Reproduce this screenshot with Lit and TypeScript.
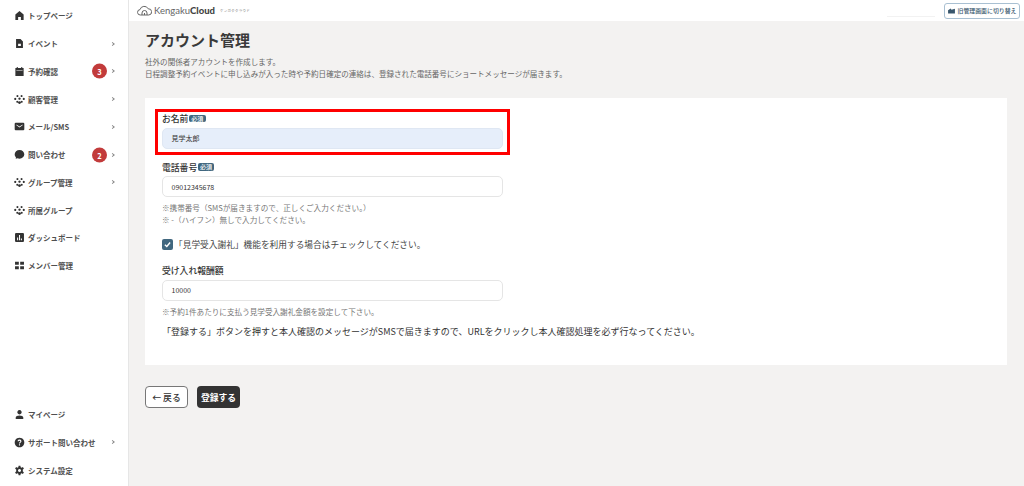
import { LitElement, html, css, svg } from "lit";
import { customElement } from "lit/decorators.js";

const P = (d: string) => html`<svg class="ic" viewBox="0 0 16 16">${svg`<path d=${d}></path>`}</svg>`;
const people = "M5 1.4a1.5 1.5 0 1 0 .01 0M11 1.4a1.5 1.5 0 1 0 .01 0M1.8 5.6a1.5 1.5 0 1 0 .01 0M14.2 5.6a1.5 1.5 0 1 0 .01 0M8 5a1.7 1.7 0 1 0 .01 0M4.8 9.8a1.5 1.5 0 1 0 .01 0M11.2 9.8a1.5 1.5 0 1 0 .01 0M8 10.6a2 2 0 1 0 .01 0z";
const icons: Record<string, string> = {
  home: "M8 1.5 14 6.5V14.5H10V10H6V14.5H2V6.5Z",
  file: "M3 1.5H9.5L13 5V14.5H3ZM6 8.5V11.5H10V8.5Z",
  cal: "M4 1.5H5.5V3H10.5V1.5H12V3H14V14.5H2V3H4ZM3.5 6V7H12.5V6Z",
  people,
  mail: "M2.5 2.5H13.5A1.5 1.5 0 0 1 15 4V12A1.5 1.5 0 0 1 13.5 13.5H2.5A1.5 1.5 0 0 1 1 12V4A1.5 1.5 0 0 1 2.5 2.5ZM3.5 6 8 9.5 12.5 6 12.5 5 8 8 3.5 5Z",
  chat: "M8 1.5C12 1.5 15 4.3 15 7.8S12 14 8 14C7 14 6 13.9 5 13.5L2.5 14.3 2.8 12C1.6 11 1 9.5 1 7.8 1 4.3 4 1.5 8 1.5Z",
  chart: "M3 1.5H13A1.5 1.5 0 0 1 14.5 3V13A1.5 1.5 0 0 1 13 14.5H3A1.5 1.5 0 0 1 1.5 13V3A1.5 1.5 0 0 1 3 1.5ZM4.5 8V12H6V8ZM7.3 4.5V12H8.8V4.5ZM10 9.5V12H11.5V9.5Z",
  grid: "M1.5 2.5H7V7H1.5ZM9 2.5H14.5V7H9ZM1.5 9H7V13.5H1.5ZM9 9H14.5V13.5H9Z",
  user: "M8 1.5A3.2 3.2 0 1 1 7.99 1.5ZM2.5 14.5V12.5C2.5 10.5 5 9.5 8 9.5S13.5 10.5 13.5 12.5V14.5Z",
  help: "M8 1a7 7 0 1 1-.01 0ZM7.2 10.5V12.2H8.8V10.5ZM8 3.8C6.4 3.8 5.3 4.7 5.2 6.2H6.8C6.9 5.6 7.3 5.3 8 5.3S9.2 5.7 9.2 6.2C9.2 7.3 7.2 7.4 7.2 9.6H8.8C8.8 8.2 10.8 7.9 10.8 6.1 10.8 4.7 9.6 3.8 8 3.8Z",
  gear: "M6.7 1.2H9.3L9.7 3.2 11.1 3.9 13 3 14.4 5.3 12.8 6.6V9.4L14.4 10.7 13 13 11.1 12.1 9.7 12.8 9.3 14.8H6.7L6.3 12.8 4.9 12.1 3 13 1.6 10.7 3.2 9.4V6.6L1.6 5.3 3 3 4.9 3.9 6.3 3.2ZM8 5.8A2.2 2.2 0 1 0 8.01 5.8Z",
};

const top = [
  { i: "home", t: "トップページ" },
  { i: "file", t: "イベント", a: 1 },
  { i: "cal", t: "予約確認", a: 1, b: "3" },
  { i: "people", t: "顧客管理", a: 1 },
  { i: "mail", t: "メール/SMS", a: 1 },
  { i: "chat", t: "問い合わせ", a: 1, b: "2" },
  { i: "people", t: "グループ管理", a: 1 },
  { i: "people", t: "所属グループ" },
  { i: "chart", t: "ダッシュボード" },
  { i: "grid", t: "メンバー管理" },
];
const bottom = [
  { i: "user", t: "マイページ" },
  { i: "help", t: "サポート問い合わせ", a: 1 },
  { i: "gear", t: "システム設定" },
];

@customElement("app-root")
export class AppRoot extends LitElement {
  static styles = css`
    :host { display: block; width: 1024px; height: 486px; overflow: hidden; font-family: "Noto Sans CJK JP", "Noto Sans", sans-serif; color: #333; }
    .app { display: flex; height: 486px; background: #f3f2f1; }
    .side { width: 128px; flex: none; background: #fff; border-right: 1px solid #e6e6e6; display: flex; flex-direction: column; justify-content: space-between; padding: 2px 0 2px; }
    .item { height: 27.75px; display: flex; align-items: center; padding-left: 14px; padding-right: 12px; font-size: 7.5px; font-weight: 700; color: #505050; gap: 3px; position: relative; }
    .ic { width: 11px; height: 11px; fill: #333; flex: none; }
    .lab { flex: 1; white-space: nowrap; }
    .arrow { position: absolute; left: 111px; top: 50%; width: 2px; height: 2px; border-top: 0.7px solid #888; border-right: 0.7px solid #888; transform: translateY(-50%) rotate(45deg); }
    .badge { position: absolute; left: 92px; top: 50%; transform: translateY(-50%); width: 15px; height: 15px; border-radius: 50%; background: #c23b3b; color: #fff; font-size: 7.5px; font-weight: 700; display: flex; align-items: center; justify-content: center; }
    .main { flex: 1; min-width: 0; display: flex; flex-direction: column; }
    .bar { height: 21px; background: #fff; display: flex; align-items: center; justify-content: space-between; padding: 0 0 0 8px; flex: none; }
    .logo { display: flex; align-items: center; gap: 2px; font-family: "Lato", "Noto Sans", sans-serif; font-size: 9.5px; color: #666; }
    .logo b { color: #444; font-weight: 900; }
    .logo svg { width: 15px; height: 11px; fill: none; stroke: #666; stroke-width: 1; }
    .logo small { font-family: "Noto Sans CJK JP", sans-serif; font-size: 3.5px; color: #777; margin-left: 3px; letter-spacing: 0.3px; }
    .right { display: flex; align-items: center; gap: 9px; margin-right: 4px; }
    .line { width: 48px; height: 1px; background: #f2f2f2; margin-top: 11px; }
    .switch { width: 76px; height: 16px; box-sizing: border-box; border: 1px solid #a9c0d2; border-radius: 3px; display: flex; align-items: center; justify-content: center; gap: 3px; font-size: 5.9px; font-weight: 500; color: #38566c; white-space: nowrap; background: #fff; }
    .switch svg { width: 7px; height: 6px; fill: #38566c; flex: none; }
    .content { flex: 1; padding: 7px 17px 0 16px; }
    h1 { margin: 0; font-size: 15px; line-height: 24px; font-weight: 700; color: #3a3a3a; }
    .desc { margin: 4px 0 0; font-size: 7.55px; line-height: 11.6px; color: #666; }
    .card { position: relative; margin-top: 19px; background: #fff; height: 267px; box-sizing: border-box; padding: 13.5px 17px 0; }
    .outline { position: absolute; left: 10px; top: 11px; width: 355px; height: 46px; box-sizing: border-box; border: 3px solid #f00; pointer-events: none; }
    .fl { display: flex; align-items: center; height: 14px; font-size: 8.8px; font-weight: 500; color: #333; }
    .req { background: #41677f; color: #fff; font-size: 6px; line-height: 7.5px; padding: 0 2.3px; border-radius: 2px; margin-left: 0.5px; }
    .in { width: 341px; height: 21px; box-sizing: border-box; border: 1px solid #e5e5e5; border-radius: 5px; background: #fff; display: flex; align-items: center; padding-left: 8.5px; font-size: 7px; color: #333; margin-top: 2px; }
    .in.fill { background: #e6eefa; border-color: #dfe7f3; }
    .note { font-size: 7.6px; line-height: 11.5px; color: #777; margin-top: 5px; }
    .m1 { margin-top: 11.5px; }
    .m2 { margin-top: 12.5px; }
    .check { display: flex; align-items: center; font-size: 8.7px; color: #444; height: 14px; margin-top: 12px; white-space: nowrap; }
    .box { width: 11px; height: 11px; border-radius: 2px; background: #41677f; display: flex; align-items: center; justify-content: center; flex: none; margin-right: 1px; }
    .box svg { width: 7px; height: 7px; fill: none; stroke: #fff; stroke-width: 1.6; }
    .msg { font-size: 9px; line-height: 12px; color: #333; white-space: nowrap; margin-top: 9px; }
    .btns { display: flex; gap: 9px; margin-top: 21px; }
    .btn { width: 43px; height: 22px; box-sizing: border-box; border-radius: 4px; display: flex; align-items: center; justify-content: center; font-size: 8.8px; font-weight: 700; }
    .back { background: #fff; border: 1px solid #777; color: #333; font-weight: 500; }
    .save { background: #333; color: #fff; }
  `;

  private row(x: any) {
    return html`<div class="item">${P(icons[x.i])}<span class="lab">${x.t}</span>
      ${x.b ? html`<span class="badge">${x.b}</span>` : ""}${x.a ? html`<span class="arrow"></span>` : ""}</div>`;
  }

  render() {
    return html`<div class="app">
      <nav class="side">
        <div>${top.map((x) => this.row(x))}</div>
        <div>${bottom.map((x) => this.row(x))}</div>
      </nav>
      <div class="main">
        <header class="bar">
          <div class="logo">
            <svg viewBox="0 0 15 11"><path d="M3.5 10A2.7 2.7 0 0 1 3 4.6 4.4 4.4 0 0 1 11.2 3.8 3.1 3.1 0 0 1 11.8 10ZM5 10V8A2.5 2.5 0 0 1 10 8V10M7.5 10V8"></path></svg>
            <span>Kengaku<b>Cloud</b></span><small>ケンガククラウド</small>
          </div>
          <div class="right">
            <div class="line"></div>
            <div class="switch"><svg viewBox="0 0 8 7"><path d="M0 2.5 3 .5 4 2 8 1V6.5H0Z"></path></svg>旧管理画面に切り替え</div>
          </div>
        </header>
        <main class="content">
          <h1>アカウント管理</h1>
          <p class="desc">社外の関係者アカウントを作成します。<br />日程調整予約イベントに申し込みが入った時や予約日確定の連絡は、登録された電話番号にショートメッセージが届きます。</p>
          <section class="card">
            <div class="outline"></div>
            <div class="fl">お名前<span class="req">必須</span></div>
            <div class="in fill">見学太郎</div>
            <div class="fl m1">電話番号<span class="req">必須</span></div>
            <div class="in">09012345678</div>
            <div class="note">※携帯番号（SMSが届きますので、正しくご入力ください。）<br />※ -（ハイフン）無しで入力してください。</div>
            <div class="check"><span class="box"><svg viewBox="0 0 8 8"><path d="M1 4.2 3.2 6.2 7 1.8"></path></svg></span>「見学受入謝礼」機能を利用する場合はチェックしてください。</div>
            <div class="fl m2">受け入れ報酬額</div>
            <div class="in">10000</div>
            <div class="note">※予約1件あたりに支払う見学受入謝礼金額を設定して下さい。</div>
            <div class="msg">「登録する」ボタンを押すと本人確認のメッセージがSMSで届きますので、URLをクリックし本人確認処理を必ず行なってください。</div>
          </section>
          <div class="btns">
            <div class="btn back">← 戻る</div>
            <div class="btn save">登録する</div>
          </div>
        </main>
      </div>
    </div>`;
  }
}
